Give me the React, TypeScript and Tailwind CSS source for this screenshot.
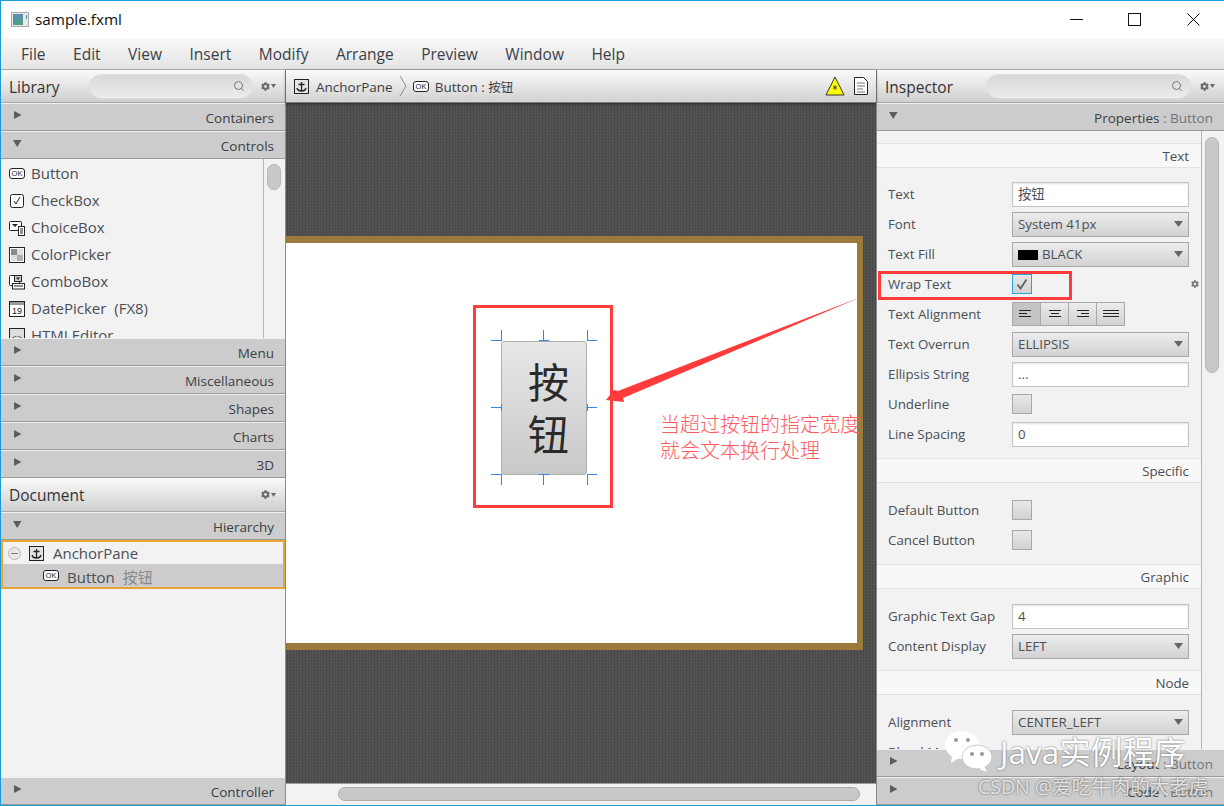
import { Search } from 'lucide-react';
import { FaCog } from 'react-icons/fa';

const FONT = "font-['Open_Sans','Noto_Sans_CJK_SC',sans-serif]";

function Tri({ open }: { open?: boolean }) {
  return (
    <svg width="9" height="9" viewBox="0 0 9 9" className="shrink-0">
      {open ? <path d="M0 1h8.5L4.2 8z" fill="#5c5c5c" /> : <path d="M1 0l7.5 4L1 8z" fill="#5c5c5c" />}
    </svg>
  );
}

function Gear() {
  return (
    <div className="flex items-center gap-[1px] text-[#6a6a6a]">
      <FaCog size={9} />
      <svg width="5" height="4" viewBox="0 0 5 4"><path d="M0 0h5L2.500 4z" fill="#6a6a6a" /></svg>
    </div>
  );
}

function AccRow({ label, open, sub }: { label: string; open?: boolean; sub?: string }) {
  return (
    <div className="h-[28px] shrink-0 flex items-center justify-between pl-[12px] pr-[11px] bg-[#cccccc] border-t border-t-[#f0f0f0] border-b border-b-[#9a9a9a] text-[13.500px] text-[#3a3f45]">
      <div className="-mt-[3px]"><Tri open={open} /></div>
      <span className="pt-[2px]">{label}{sub && <span className="text-[#70767c]"> : {sub}</span>}</span>
    </div>
  );
}

function PanelHead({ title, search, tall }: { title: string; search?: string; tall?: boolean }) {
  return (
    <div className={`${tall ? 'h-[34px]' : 'h-[33px]'} shrink-0 flex items-center pl-[8px] pr-[9px] bg-gradient-to-b from-[#fafafa] to-[#cfcfcf] border-b border-[#a8a8a8]`}>
      <span className="text-[15.500px] text-[#333] flex-1 pt-[3px]">{title}</span>
      {search && (
        <div className={`${search} h-[25px] rounded-full border border-[#dedede] bg-gradient-to-b from-[#d8d8d8] to-[#ececec] flex items-center justify-end pr-[7px]`}>
          <Search size={12} className="text-[#777]" />
        </div>
      )}
      <Gear />
    </div>
  );
}

function OkIcon() {
  return (
    <svg width="16" height="11" viewBox="0 0 16 11" className="shrink-0">
      <rect x=".5" y=".5" width="15" height="10" rx="2.5" fill="#fff" stroke="#222" />
      <text x="8" y="8" textAnchor="middle" fontSize="7.5" fontFamily="Liberation Sans" fill="#222">OK</text>
    </svg>
  );
}

function CtrlIcon({ kind }: { kind: string }) {
  if (kind === 'ok') return <OkIcon />;
  return (
    <svg width="16" height="16" viewBox="0 0 16 16" className="shrink-0">
      {kind === 'check' && <><rect x="1.500" y="1.500" width="13" height="13" rx="2" fill="#fff" stroke="#222" /><path d="M5 8l2 3 4-7" fill="none" stroke="#222" /></>}
      {kind === 'choice' && <><rect x=".5" y="1.500" width="12" height="9" rx="1" fill="#fff" stroke="#222" /><path d="M3 4h6L6 7z" fill="#222" /><rect x="9.500" y="6.500" width="6" height="9" fill="#fff" stroke="#222" /><path d="M11 9h3M11 11h3M11 13h3" stroke="#222" /></>}
      {kind === 'color' && <><rect x=".5" y=".5" width="15" height="15" fill="#fff" stroke="#222" /><rect x="2" y="2" width="6" height="6" fill="#8a8a8a" /><rect x="8" y="8" width="6" height="6" fill="#b0b0b0" /><rect x="8" y="2" width="6" height="6" fill="#ddd" /><rect x="2" y="8" width="6" height="6" fill="#ddd" /></>}
      {kind === 'combo' && <><rect x=".5" y="1.500" width="10" height="10" rx="1" fill="#fff" stroke="#222" /><rect x="5.500" y="1.500" width="7" height="6" fill="#ccc" stroke="#222" /><path d="M7 3.500h4L9 6z" fill="#222" /><rect x="3.500" y="9.500" width="12" height="5.500" fill="#fff" stroke="#222" /><path d="M5 12h9" stroke="#222" /></>}
      {kind === 'date' && <><rect x=".5" y=".5" width="15" height="15" fill="#fff" stroke="#222" /><rect x="1" y="1" width="14" height="3" fill="#999" /><text x="8" y="13" textAnchor="middle" fontSize="9" fontFamily="Liberation Sans" fill="#222">19</text></>}
      {kind === 'html' && <><rect x=".5" y=".5" width="15" height="15" fill="#ddd" stroke="#222" /><text x="8" y="12" textAnchor="middle" fontSize="8" fontFamily="Liberation Sans" fill="#222">{'<>'}</text></>}
    </svg>
  );
}

function AnchorIcon() {
  return (
    <svg width="15" height="15" viewBox="0 0 15 15" className="shrink-0">
      <rect x=".5" y=".5" width="14" height="14" fill="#e4e4e4" stroke="#222" />
      <path d="M7.500 3v9M4.500 5.500h6M3 9c.5 2.500 2.500 3 4.500 3s4-.5 4.500-3" fill="none" stroke="#222" strokeWidth="1.300" />
    </svg>
  );
}

const controls = [
  ['ok', 'Button'], ['check', 'CheckBox'], ['choice', 'ChoiceBox'], ['color', 'ColorPicker'],
  ['combo', 'ComboBox'], ['date', 'DatePicker  (FX8)'], ['html', 'HTMLEditor'],
];

function LeftColumn() {
  return (
    <div className="w-[285px] shrink-0 flex flex-col bg-[#f2f2f2] border-r border-[#8a8a8a]">
      <PanelHead title="Library" search="w-[164px] mr-[8px]" />
      <AccRow label="Containers" />
      <AccRow label="Controls" open />
      <div className="h-[179px] shrink-0 flex overflow-hidden">
        <div className="w-[263px] border-r border-[#b4b4b4] pt-[1px]">
          {controls.map(([k, name]) => (
            <div key={name} className="h-[27px] flex items-center gap-[6px] pl-[8px] text-[15px] text-[#4a4f55] whitespace-pre">
              <div className="w-[16px] flex justify-center"><CtrlIcon kind={k} /></div>
              {name}
            </div>
          ))}
        </div>
        <div className="flex-1 pt-[5px] pl-[3px]">
          <div className="w-[14px] h-[26px] rounded-[7px] bg-[#c8c8c8] border border-[#b8b8b8]" />
        </div>
      </div>
      {['Menu', 'Miscellaneous', 'Shapes', 'Charts', '3D'].map(n => <AccRow key={n} label={n} />)}
      <PanelHead title="Document" tall />
      <AccRow label="Hierarchy" open />
      <div className="h-[49px] shrink-0 border-2 border-[#e8a435] text-[15px] text-[#4a4f55]">
        <div className="h-[22px] flex items-center pl-[5px] gap-[8px]">
          <div className="w-[13px] h-[13px] rounded-full border border-[#b5b5b5] bg-[#e8e8e8] flex items-center justify-center"><div className="w-[7px] h-[1px] bg-[#777]" /></div>
          <AnchorIcon />
          <span className="ml-[1px]">AnchorPane</span>
        </div>
        <div className="h-[23px] flex items-center pl-[40px] gap-[8px] bg-[#cccccc]">
          <OkIcon />
          <span className="pt-[3px]">Button <span className="text-[#8a8a8a] ml-[4px]">按钮</span></span>
        </div>
      </div>
      <div className="flex-1" />
      <AccRow label="Controller" />
    </div>
  );
}

function Handle({ className, d }: { className: string; d: string }) {
  return (
    <svg width="12" height="12" viewBox="0 0 12 12" className={`absolute ${className}`}>
      <path d={d} fill="none" stroke="#2f86e8" />
    </svg>
  );
}

function Stage() {
  return (
    <div className="relative w-[577px] h-[414px] bg-white border-t-[7px] border-b-[7px] border-r-[6px] border-[#9c7a3c] mt-[133px]">
      <div className="absolute left-[215px] top-[98px] w-[86px] h-[134px] rounded-[3px] border border-[#aeaeae] bg-gradient-to-b from-[#e8e8e8] to-[#c8c8c8] flex items-center justify-center pl-[9px] text-[41px] leading-[52px] text-[#2a2a2a] text-center">
        <span className="w-[41px]">按钮</span>
      </div>
      <Handle className="left-[205px] top-[86px]" d="M0 11.500h10M10.500 1v11" />
      <Handle className="left-[253px] top-[86px]" d="M4.500 1v11M0 11.500h10" />
      <Handle className="left-[300px] top-[86px]" d="M1.500 1v11M1 11.500h10" />
      <Handle className="left-[205px] top-[158px]" d="M0 6.500h11M10.500 3v7" />
      <Handle className="left-[300px] top-[158px]" d="M1 6.500h10M1.500 3v7" />
      <Handle className="left-[205px] top-[231px]" d="M0 .5h10M10.500 0v11" />
      <Handle className="left-[253px] top-[231px]" d="M4.500 0v11M0 .5h10" />
      <Handle className="left-[300px] top-[231px]" d="M1.500 0v11M1 .5h10" />
      <div className="absolute left-[374px] top-[169px] w-[210px] text-[20px] leading-[26px] font-light text-[#ff5a5f]">
        当超过按钮的指定宽度<br />就会文本换行处理
      </div>
    </div>
  );
}

function CenterColumn() {
  return (
    <div className="w-[590px] shrink-0 flex flex-col">
      <div className="h-[33px] shrink-0 flex items-center pl-[8px] pr-[8px] bg-gradient-to-b from-[#fbfbfb] to-[#d2d2d2] border-b border-[#7a7a7a] text-[13.500px] text-[#3a3f45] shadow-[0_1px_3px_rgba(0,0,0,0.5)] z-10">
        <AnchorIcon />
        <span className="ml-[7px] pt-[2px]">AnchorPane</span>
        <svg width="9" height="22" viewBox="0 0 9 22" className="ml-[6px]"><path d="M1 1l6 10-6 10" fill="none" stroke="#8a8a8a" /></svg>
        <div className="ml-[5px]"><OkIcon /></div>
        <span className="ml-[6px] pt-[2px]">Button : <span className="text-[12.500px]">按钮</span></span>
        <div className="flex-1" />
        <svg width="20" height="20" viewBox="0 0 20 20"><path d="M10 1l9 18H1z" fill="#ffff00" stroke="#333" /><path d="M10 9v5M8 10.500l4 2M12 10.500l-4 2" stroke="#333" strokeWidth=".8" /></svg>
        <svg width="14" height="18" viewBox="0 0 14 18" className="ml-[9px]"><path d="M.5.5h9l4 4v13H.5z" fill="#fff" stroke="#222" /><path d="M3 6h8M3 9h8M3 12h6M3 15h8" stroke="#777" /></svg>
      </div>
      <div className="flex-1 overflow-hidden bg-[repeating-conic-gradient(#494949_0_25%,#565656_0_50%)] bg-[length:3px_3px]">
        <Stage />
      </div>
      <div className="h-[22px] shrink-0 bg-[#f2f2f2] border-t border-[#9a9a9a] pt-[3px] pl-[52px]">
        <div className="w-[522px] h-[14px] rounded-[7px] bg-[#c8c8c8] border border-[#aaaaaa]" />
      </div>
    </div>
  );
}

function SectionHead({ title }: { title: string }) {
  return (
    <div className="h-[25px] flex items-center justify-end pr-[12px] pt-[2px] bg-[#f8f8f8] border-y border-[#e2e2e2] text-[13.300px] text-[#4a4f55]">
      {title}
    </div>
  );
}

function Row({ label, children, gear }: { label: string; children?: React.ReactNode; gear?: boolean }) {
  return (
    <div className="h-[30px] flex items-center pl-[11px] text-[13.300px] text-[#4a4f55]">
      <span className="w-[124px] shrink-0 whitespace-nowrap pt-[2px]">{label}</span>
      {children}
      {gear && <FaCog size={8} className="ml-auto mr-[2px] text-[#777]" />}
    </div>
  );
}

function Input({ value }: { value: string }) {
  return (
    <div className="w-[177px] h-[25px] flex items-center pl-[5px] pt-[1px] bg-white border border-[#c4c4c4] text-[13.300px] text-[#4a4f55] shadow-[inset_0_1px_2px_rgba(0,0,0,0.12)]">
      {value}
    </div>
  );
}

function Select({ children }: { children: React.ReactNode }) {
  return (
    <div className="w-[177px] h-[25px] flex items-center justify-between pl-[5px] pr-[5px] bg-gradient-to-b from-[#ececec] to-[#d2d2d2] border border-[#a8a8a8] text-[13.300px] text-[#4a4f55]">
      <span className="flex items-center gap-[4px] pt-[1px]">{children}</span>
      <svg width="9" height="6" viewBox="0 0 9 6"><path d="M0 0h9L4.500 6z" fill="#666" /></svg>
    </div>
  );
}

function Check({ checked }: { checked?: boolean }) {
  return (
    <div className={`w-[20px] h-[20px] flex items-center justify-center bg-gradient-to-b from-[#e8e8e8] to-[#d2d2d2] border ${checked ? 'border-[#2aa5dc]' : 'border-[#a8a8a8]'}`}>
      {checked && <svg width="12" height="12" viewBox="0 0 12 12"><path d="M1.500 6.500l3 4 6-9" fill="none" stroke="#5e5e5e" strokeWidth="1.800" /></svg>}
    </div>
  );
}

const alignLines = [
  ['M0 .5h12', 'M0 3.500h8', 'M0 6.500h12'],
  ['M2 .5h12', 'M4 3.500h8', 'M2 6.500h12'],
  ['M2 .5h12', 'M6 3.500h8', 'M2 6.500h12'],
  ['M0 .5h16', 'M0 3.500h16', 'M0 6.500h16'],
];

function AlignGroup() {
  return (
    <div className="flex">
      {alignLines.map((l, i) => (
        <div key={i} className={`w-[29px] h-[24px] flex items-center justify-center border border-[#a8a8a8] -ml-[1px] first:ml-0 ${i === 0 ? 'bg-[#c4c4c4]' : 'bg-gradient-to-b from-[#ececec] to-[#d2d2d2]'}`}>
          <svg width="16" height="8" viewBox="0 0 16 8"><path d={l.join('')} stroke="#222" /></svg>
        </div>
      ))}
    </div>
  );
}

function RightColumn() {
  return (
    <div className="flex-1 flex flex-col bg-[#f2f2f2] border-l border-[#8a8a8a]">
      <PanelHead title="Inspector" search="w-[205px] mr-[9px]" />
      <AccRow label="Properties" open sub="Button" />
      <div className="flex-1 flex overflow-hidden">
        <div className="w-[325px] shrink-0 border-r border-[#b4b4b4] pt-[12px]">
          <SectionHead title="Text" />
          <div className="pt-[11px] pb-[9px]">
            <Row label="Text"><Input value="按钮" /></Row>
            <Row label="Font"><Select>System 41px</Select></Row>
            <Row label="Text Fill"><Select><span className="w-[20px] h-[10px] bg-black" />BLACK</Select></Row>
            <Row label="Wrap Text" gear><Check checked /></Row>
            <Row label="Text Alignment"><AlignGroup /></Row>
            <Row label="Text Overrun"><Select>ELLIPSIS</Select></Row>
            <Row label="Ellipsis String"><Input value="..." /></Row>
            <Row label="Underline"><Check /></Row>
            <Row label="Line Spacing"><Input value="0" /></Row>
          </div>
          <SectionHead title="Specific" />
          <div className="pt-[12px] pb-[9px]">
            <Row label="Default Button"><Check /></Row>
            <Row label="Cancel Button"><Check /></Row>
          </div>
          <SectionHead title="Graphic" />
          <div className="pt-[12px] pb-[9px]">
            <Row label="Graphic Text Gap"><Input value="4" /></Row>
            <Row label="Content Display"><Select>LEFT</Select></Row>
          </div>
          <SectionHead title="Node" />
          <div className="pt-[12px]">
            <Row label="Alignment"><Select>CENTER_LEFT</Select></Row>
            <Row label="Blend Mode" />
          </div>
        </div>
        <div className="flex-1 pt-[6px] pl-[3px]">
          <div className="w-[14px] h-[236px] rounded-[7px] bg-[#c8c8c8] border border-[#b8b8b8]" />
        </div>
      </div>
      <AccRow label="Layout" sub="Button" />
      <AccRow label="Code" sub="Button" />
    </div>
  );
}

export default function App() {
  return (
    <div className={`relative w-[1224px] h-[806px] overflow-hidden flex flex-col bg-white border-t border-l border-b border-[#1e9bd7] ${FONT}`}>
      <div className="h-[37px] shrink-0 flex items-center pl-[10px] text-[#111]">
        <svg width="18" height="15" viewBox="0 0 18 15">
          <defs>
            <linearGradient id="ti" x1="0" y1="0" x2="0" y2="1"><stop offset="0" stopColor="#5a8fb5" /><stop offset="1" stopColor="#4fa07e" /></linearGradient>
          </defs>
          <rect x=".5" y=".5" width="17" height="14" fill="#e8e8e8" stroke="#aaa" />
          <rect x="2" y="2" width="10" height="11" fill="url(#ti)" />
          <rect x="15" y="3" width="1" height="4" fill="#4f8fb0" />
        </svg>
        <span className="ml-[6px] text-[15.300px]">sample.fxml</span>
        <div className="flex-1" />
        <svg width="13" height="13" viewBox="0 0 13 13"><path d="M0 6.500h13" stroke="#111" /></svg>
        <svg width="13" height="13" viewBox="0 0 13 13" className="ml-[45px]"><rect x=".5" y=".5" width="12" height="12" fill="none" stroke="#111" /></svg>
        <svg width="13" height="13" viewBox="0 0 13 13" className="ml-[46px] mr-[24px]"><path d="M.5.5l12 12M12.500.5l-12 12" stroke="#111" /></svg>
      </div>
      <div className="h-[32px] shrink-0 flex items-center gap-[27.500px] pl-[20px] bg-gradient-to-b from-[#f8f8f8] to-[#e4e4e4] border-b border-[#a8a8a8] text-[15.500px] text-[#3a3f45]">
        {['File', 'Edit', 'View', 'Insert', 'Modify', 'Arrange', 'Preview', 'Window', 'Help'].map(m => <span key={m} className="pt-[2px]">{m}</span>)}
      </div>
      <div className="flex-1 flex min-h-0">
        <LeftColumn />
        <CenterColumn />
        <RightColumn />
      </div>

      {/* annotations drawn on top of the screenshot */}
      <div className="absolute left-[472px] top-[304px] w-[140px] h-[203px] border-[3px] border-[#ff3b3b]" />
      <div className="absolute left-[877px] top-[270px] w-[194px] h-[29px] border-[3px] border-[#ff3b3b]" />
      <svg width="270" height="120" viewBox="0 0 270 120" className="absolute left-[600px] top-[290px]">
        <path d="M260 6L17 100 13 99 5 109 23 111 22 107z" fill="#ff3b3b" />
      </svg>
      <svg width="50" height="44" viewBox="0 0 50 44" className="absolute left-[943px] top-[728px]">
        <ellipse cx="18" cy="16" rx="17" ry="14" fill="#fff" />
        <path d="M8 26l-1 8 8-5z" fill="#fff" />
        <ellipse cx="33" cy="28" rx="15" ry="12" fill="#fff" stroke="#999" strokeWidth=".5" />
        <path d="M40 37l3 6-8-3z" fill="#fff" />
        <circle cx="12" cy="11" r="2" fill="#999" /><circle cx="24" cy="11" r="2" fill="#999" />
        <circle cx="28" cy="25" r="2" fill="#999" /><circle cx="38" cy="25" r="2" fill="#999" />
      </svg>
      <div className="absolute left-[999px] top-[731px] text-[31.500px] leading-[40px] text-white [text-shadow:0_0_2px_#555] whitespace-nowrap">Java实例程序</div>
      <div className="absolute left-[977px] top-[773px] text-[19.500px] leading-[26px] text-white/80 [text-shadow:0_0_2px_#444] whitespace-nowrap">CSDN @爱吃牛肉的大老虎</div>
    </div>
  );
}
